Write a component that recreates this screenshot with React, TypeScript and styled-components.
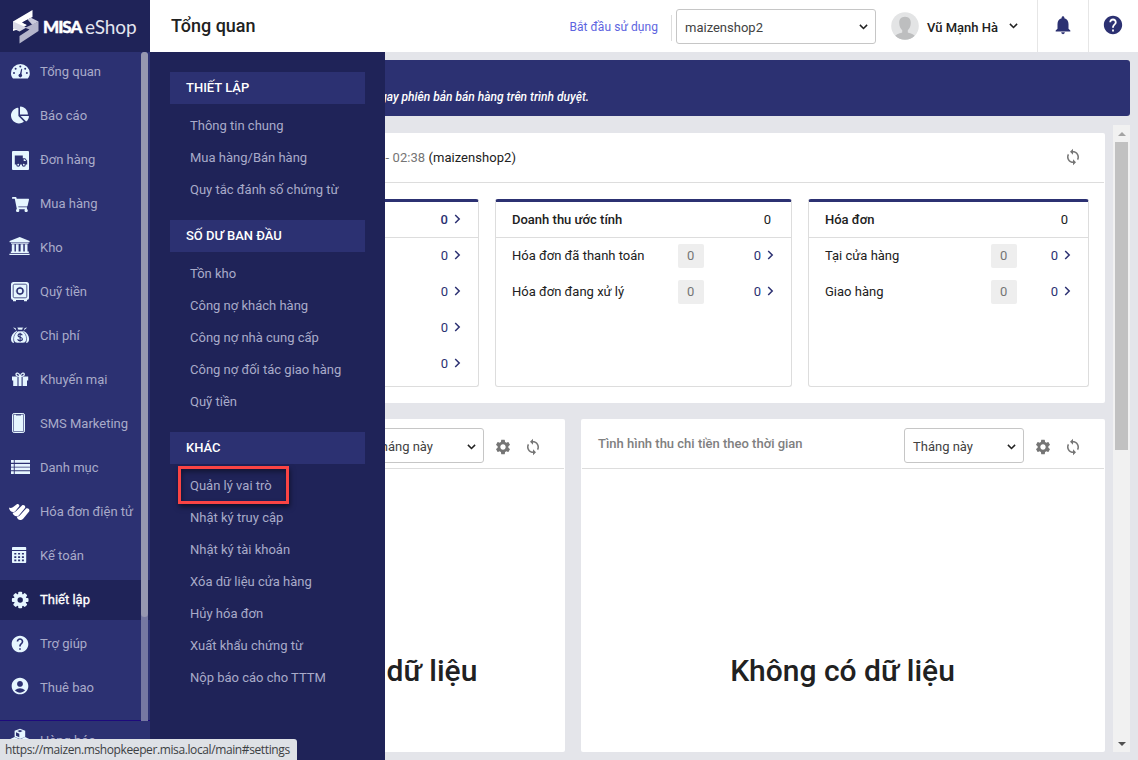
import React from 'react';
import styled, { createGlobalStyle } from 'styled-components';
import { FaChartPie, FaShoppingCart } from 'react-icons/fa';
import { MdAccountCircle, MdHelp, MdNotifications, MdSettings, MdSync } from 'react-icons/md';

const color = {
  navy: '#2c3172',
  deep: '#1f2358',
  line: '#dddddd',
  canvas: '#e4e5ea',
  icon: '#e6f6ff',
  text: '#212121',
  muted: '#a9abc9',
};

const GlobalStyle = createGlobalStyle`
  * { box-sizing: border-box; }
  body { margin: 0; font-family: Roboto, "Liberation Sans", sans-serif; font-size: 13px; color: ${color.text}; background: #fff; overflow: hidden; }
  svg { display: block; flex: none; overflow: visible; }
`;

const Page = styled.div`
  position: relative;
  display: flex;
  width: 1138px;
  height: 760px;
  overflow: hidden;
  white-space: nowrap;
`;

/* ---------- sidebar ---------- */
const Sidebar = styled.aside`
  position: relative;
  flex: none;
  width: 150px;
  height: 760px;
  overflow: hidden;
  background: ${color.navy};
`;
const Brand = styled.div`
  display: flex;
  align-items: center;
  height: 52px;
  padding: 2px 0 0 13px;
  background: ${color.deep};
  color: #fff;
`;
const BrandName = styled.span`
  width: 41px;
  margin-left: 4px;
  padding-bottom: 2px;
  font: 900 17px Lato, sans-serif;
  letter-spacing: -1px;
  -webkit-text-stroke: 0.4px #fff;
`;
const BrandSuffix = styled.span`
  margin-left: 1px;
  padding-bottom: 2px;
  font: 400 19px Lato, sans-serif;
  letter-spacing: -0.1px;
  color: #e4e5f0;
`;
const NavList = styled.nav`
  display: flex;
  flex-direction: column;
  gap: 4px;
  height: 669px;
  border-bottom: 1px solid #1d0a7c;
`;
const NavItem = styled.a<{ $active?: boolean }>`
  display: flex;
  align-items: center;
  flex: none;
  gap: 10px;
  height: 40px;
  padding: 0 0 0 10px;
  color: ${(p) => (p.$active ? '#fff' : color.muted)};
  background: ${(p) => (p.$active ? color.deep : 'transparent')};
  -webkit-text-stroke: ${(p) => (p.$active ? '0.3px #fff' : '0')};
`;
const NavLabel = styled.span`
  padding-bottom: 2px;
`;
const NavIcon = styled.span<{ $lift?: number }>`
  display: flex;
  align-items: center;
  justify-content: center;
  flex: none;
  width: 20px;
  height: 20px;
  margin-bottom: ${(p) => p.$lift || 0}px;
  color: ${color.icon};
`;
const NavTrack = styled.div`
  position: absolute;
  left: 141px;
  top: 52px;
  width: 7px;
  height: 669px;
  border-radius: 4px 4px 0 0;
  background: #7678a2;
`;
const NavThumb = styled.div`
  height: 565px;
  border-radius: 4px;
  background: #9697b0;
`;

/* ---------- flyout ---------- */
const Flyout = styled.div`
  position: absolute;
  left: 150px;
  top: 52px;
  width: 235px;
  height: 708px;
  padding: 20px;
  display: flex;
  flex-direction: column;
  gap: 14px;
  background: ${color.deep};
`;
const FlyoutHead = styled.h3`
  margin: 0 0 6px;
  padding-left: 16px;
  font-size: 13px;
  font-weight: 500;
  line-height: 32px;
  color: #fff;
  background: ${color.navy};
`;
const FlyoutItem = styled.a`
  position: relative;
  display: block;
  padding-left: 20px;
  line-height: 32px;
  height: 32px;
  color: ${color.muted};
`;
const Marker = styled.span`
  position: absolute;
  left: 8px;
  top: -4px;
  width: 111px;
  height: 38px;
  border: 3px solid #fb4444;
  box-shadow: 1px 3px 5px rgba(0, 0, 0, 0.5), inset 1px 3px 5px rgba(0, 0, 0, 0.4);
`;

/* ---------- top bar ---------- */
const Main = styled.main`
  flex: 1;
  display: flex;
  flex-direction: column;
`;
const TopBar = styled.header`
  display: flex;
  align-items: center;
  flex: none;
  height: 52px;
  padding-left: 21px;
  background: #fff;
`;
const Title = styled.h1`
  margin: 0;
  padding-bottom: 2px;
  flex: 1;
  font-size: 18px;
  font-weight: 500;
`;
const StartLink = styled.a`
  margin-top: 1px;
  font-size: 12px;
  letter-spacing: 0.07px;
  color: #5d64e0;
`;
const Rule = styled.i`
  width: 1px;
  height: 26px;
  margin: 4px 4px 0 13px;
  background: ${color.line};
`;
const Select = styled.div<{ $w: number; $drop?: number }>`
  display: flex;
  align-items: center;
  justify-content: space-between;
  flex: none;
  width: ${(p) => p.$w}px;
  height: 35px;
  margin-top: ${(p) => p.$drop || 0}px;
  padding: 2px 7px 0 8px;
  border: 1px solid #c6c6c6;
  border-radius: 3px;
  color: #424242;
  background: #fff;
`;
const UserMenu = styled.div`
  display: flex;
  align-items: center;
  margin: 0 19px 0 15px;
`;
const UserName = styled.span`
  width: 71px;
  margin: 2px 11px 0 8px;
  font-weight: 500;
`;
const TopCell = styled.div<{ $w: number }>`
  display: flex;
  justify-content: center;
  align-items: center;
  width: ${(p) => p.$w}px;
  height: 52px;
  padding: 0 ${(p) => (p.$w < 51 ? 2 : 0)}px 2px 0;
  border-left: 1px solid #e6e6e6;
  color: ${color.navy};
`;

/* ---------- content ---------- */
const Content = styled.section`
  flex: 1;
  display: flex;
  flex-direction: column;
  gap: 9px;
  padding: 8px;
  background: ${color.canvas};
`;
const Banner = styled.div`
  flex: none;
  height: 56px;
  padding-top: 29px;
  border-radius: 3px;
  background: ${color.navy};
  color: #fff;
`;
const BannerText = styled.p`
  width: 431px;
  margin: 0;
  font-size: 12px;
  font-weight: 500;
  font-style: italic;
  line-height: 16px;
  text-align: right;
`;
const ScrollRow = styled.div`
  display: flex;
  flex: 1;
  justify-content: space-between;
  padding-left: 8px;
`;
const Board = styled.div`
  display: flex;
  flex-direction: column;
  width: 939px;
  gap: 16px;
  padding-top: 8px;
`;
const Panel = styled.div<{ $w?: number }>`
  display: flex;
  flex-direction: column;
  flex: none;
  width: ${(p) => (p.$w ? `${p.$w}px` : 'auto')};
  border-radius: 2px;
  background: #fff;
`;
const PanelHead = styled.div`
  display: flex;
  align-items: center;
  justify-content: space-between;
  height: 50px;
  margin: 0 1px;
  padding: 0 22px 0 16px;
  border-bottom: 1px solid ${color.line};
`;
const ActivityText = styled.div`
  width: 333px;
  text-align: right;
  letter-spacing: 0.05px;
  em { font-style: normal; color: #757575; }
`;
const Cards = styled.div`
  display: flex;
  gap: 16px;
  padding: 16px;
`;
const Card = styled.div<{ $w: number }>`
  width: ${(p) => p.$w}px;
  height: 188px;
  border: 1px solid ${color.line};
  border-top: 3px solid ${color.navy};
  border-radius: 3px;
`;
const CardHead = styled.div<{ $link?: boolean }>`
  display: flex;
  align-items: center;
  justify-content: ${(p) => (p.$link ? 'flex-end' : 'space-between')};
  height: 36px;
  padding: 0 ${(p) => (p.$link ? 17 : 20)}px 0 16px;
  border-bottom: 1px solid ${color.line};
  font-weight: 500;
  span { font-weight: 400; }
`;
const CardRow = styled.div`
  display: flex;
  align-items: center;
  justify-content: flex-end;
  height: 36px;
  padding: 0 17px 1px 16px;
`;
const RowLabel = styled.span`
  flex: 1;
`;
const Badge = styled.span<{ $gap: number }>`
  width: 26px;
  height: 24px;
  margin: 1px ${(p) => p.$gap}px 0 0;
  line-height: 24px;
  text-align: center;
  border-radius: 2px;
  color: #757575;
  background: #eeeeee;
`;
const Value = styled.div<{ $bold?: boolean }>`
  display: flex;
  align-items: center;
  gap: 6px;
  color: ${color.navy};
  font-weight: ${(p) => (p.$bold ? 500 : 400)};
  svg { margin-bottom: 1px; }
`;
const ChartRow = styled.div`
  display: flex;
  flex: 1;
  gap: 16px;
`;
const ChartTitle = styled.span`
  flex: 1;
  font-weight: 500;
  color: #808080;
`;
const Tools = styled.div<{ $drop?: number }>`
  display: flex;
  gap: 12px;
  margin: ${(p) => p.$drop || 0}px 0 ${(p) => (p.$drop ? 0 : 2)}px 10px;
  color: #757575;
`;
const Empty = styled.div`
  flex: 1;
  padding: 184px 1px 0 0;
  font-size: 30px;
  font-weight: 500;
  line-height: 36px;
  text-align: center;
`;
const ScrollBar = styled.div`
  display: flex;
  flex-direction: column;
  align-items: center;
  width: 17px;
  background: #f1f1f1;
`;
const ScrollThumb = styled.div`
  width: 13px;
  height: 308px;
  margin-bottom: auto;
  background: #c1c1c1;
`;
const ScrollArrow = styled.div`
  display: flex;
  align-items: center;
  justify-content: center;
  height: 17px;
`;
const StatusBubble = styled.div`
  position: absolute;
  left: 0;
  top: 739px;
  width: 297px;
  height: 21px;
  padding-left: 5px;
  border-top-right-radius: 3px;
  background: #dee1e6;
  color: #3c4043;
  font: 12px/21px "Open Sans", sans-serif;
  letter-spacing: -0.39px;
`;

const cut = color.navy;
const px = { width: 20, height: 20, viewBox: '0 0 20 20', fill: 'currentColor' };

const DashIcon = () => (
  <svg {...px}>
    <path d="M3 16.400C1.600 15 1 13.200 1 11.300a9.400 9.400 0 0 1 18.800 0c0 1.900-.6 3.700-2 5.100z" />
    <g fill={cut}>
      <circle cx="4" cy="11" r="1" /><circle cx="5.600" cy="6.800" r="1" /><circle cx="10.300" cy="4.400" r="1" />
      <circle cx="15.200" cy="6.800" r="1" /><circle cx="16.900" cy="11" r="1" /><circle cx="10.300" cy="13.600" r="1.800" />
      <path d="M9.600 13 11.300 6.800l.9.2L11.200 14z" />
    </g>
  </svg>
);
const TruckIcon = () => (
  <svg {...px}>
    <rect x="2" y="1" width="17" height="19" rx="1" />
    <g fill={cut}>
      <path d="M4.800 5.500h8v2.800h2.400l2 2.500v3.700H4.800z" />
      <circle cx="8.200" cy="14.700" r="2" /><circle cx="13.800" cy="14.700" r="2" />
    </g>
    <path d="M13.700 9.200h1.200l1.300 1.800h-2.500z" /><circle cx="8.200" cy="14.700" r=".9" /><circle cx="13.800" cy="14.700" r=".9" />
  </svg>
);
const BankIcon = () => (
  <svg {...px}>
    <path d="M9.700-1 19.600 3v1.300H-.4V3zM1 4.800h17.500v1H1zM1.800 6.300h2.700v7.900H1.800zM5.900 6.300h2.700v7.900H5.900zM10.600 6.300h2.700v7.900h-2.700zM14.800 6.300h2.700v7.900h-2.700zM.8 13.400h18V15H.8zM-.6 15.700h20.200V17H-.6z" />
  </svg>
);
const SafeIcon = () => (
  <svg {...px}>
    <path d="M3 17h3v2.200H3zM14 17h3v2.200h-3z" />
    <rect x="1" y="0" width="18" height="18" rx="2.500" />
    <rect x="3.200" y="2.200" width="13.600" height="13.600" rx="1.500" fill="none" stroke={cut} strokeWidth=".8" />
    <circle cx="10" cy="9" r="3" fill="none" stroke={cut} strokeWidth="1.500" />
    <path d="M10 4.700v1M10 12.300v1M5.700 9h1M13.300 9h1" stroke={cut} strokeWidth=".7" />
  </svg>
);
const MoneyIcon = () => (
  <svg {...px}>
    <path d="M3 1.500 5.500 2l1 3C3 6.500 1 10 1 13c0 2.500 1.400 3.900 3 4-1-4 .5-8.500 4-11zM17.200 1.500 14.700 2l-1 3c3.500 1.500 5.400 5 5.400 8 0 2.500-1.400 3.900-3 4 1-4-.5-8.500-4-11z" />
    <path d="M7 1.200h6.400L12.300 4h-4.200zM8 5h4.400c2.500 1.800 4.200 4.800 4.200 7.800S15 17 13 17H7.200c-2 0-3.600-1.200-3.600-4.200S5.500 6.800 8 5z" stroke={cut} strokeWidth=".6" />
    <path d="M12.300 9.200c-.4-.9-1.200-1.300-2.200-1.300-1.200 0-2.100.6-2.100 1.600 0 2.400 4.400 1.200 4.400 3.500 0 1.100-1 1.700-2.300 1.700-1.200 0-2.100-.5-2.500-1.500M10.100 6.800v9" fill="none" stroke={cut} strokeWidth="1.100" />
  </svg>
);
const GiftIcon = () => (
  <svg {...px}>
    <path d="M2 6.500h16.200v4H2zM3.200 10.500h13.800V16H3.200z" />
    <path d="M8 7v9M12.100 7v9" stroke={cut} strokeWidth="1.100" />
    <path d="M10.100 6.300C8.500 6.500 6 6 6 4.300S9 2.300 10.100 6.300zM10.200 6.300c1.600.2 4.100-.3 4.100-2s-3-2-4.100 2z" fill="none" stroke="currentColor" strokeWidth="1.300" />
  </svg>
);
const PhoneIcon = () => (
  <svg {...px}>
    <rect x="2.500" y="-.5" width="12" height="19" rx="1.600" fill="none" stroke="currentColor" />
    <path d="M3.600.6h9.800v16.800H3.600z" />
    <path d="M6 .4h5v1H6z" fill={cut} />
  </svg>
);
const ListIcon = () => (
  <svg {...px}>
    <path d="M1 2h2.800v2.800H1zM1 5.900h2.800v2.800H1zM1 9.500h2.800v2.800H1zM1 13.200h2.800V16H1zM4.700 2H20v2.800H4.700zM4.700 5.900H20v2.800H4.700zM4.700 9.500H20v2.800H4.700zM4.700 13.200H20V16H4.700z" />
  </svg>
);
const InvoiceIcon = () => (
  <svg {...px}>
    <g fill="#fff">
      <path d="M-1 5.800c1.800.3 3 .1 4.200-.8L6.800 2.200c1.500-.8 3.200.7 2.300 2.300L5 9.400C2.600 11.200-.4 9.400-1 5.800z" />
      <path d="M2.500 10.800c1.500-.1 2.500-.6 3.500-1.500l6.200-6c1.800-.8 3.800.9 2.800 2.700l-6.200 7.400c-2.300 2-5.400.6-6.300-2.600z" />
      <path d="M6.800 14.800c1.500-.1 2.400-.7 3.400-1.700l5.900-6.500c1.900-1 4.100.9 3 2.900L13.400 16.400c-2.600 2.600-5.600 2-6.600-1.600z" />
    </g>
  </svg>
);
const CalcIcon = () => (
  <svg {...px}>
    <path d="M3.200 1h12.300c.4 0 .7.300.7.700V4H2V1.700c0-.4.500-.7 1.200-.7zM2 5h14.200v11c0 .6-.4 1-1 1H3c-.6 0-1-.4-1-1z" />
    <path d="M4.300 6.900h2v1.700h-2zM8.100 6.900h2v1.700h-2zM11.900 6.900h2v1.700h-2zM4.300 10.200h2v1.700h-2zM8.100 10.200h2v1.700h-2zM11.900 10.200h2v1.700h-2zM4.300 13.500h2v1.700h-2zM8.100 13.500h2v1.700h-2zM11.900 13.500h2v1.700h-2z" fill={cut} />
  </svg>
);
const GearIcon = () => (
  <svg {...px}>
    {[0, 45, 90, 135].map((a) => (
      <rect key={a} x="8.200" y="1.700" width="4" height="16.600" rx="1" transform={`rotate(${a} 10.200 10)`} />
    ))}
    <circle cx="10.200" cy="10" r="6.300" />
    <circle cx="10.200" cy="10" r="2.700" fill={color.deep} />
  </svg>
);
const BoxIcon = () => (
  <svg {...px}>
    <path d="m10-2.300 5.200 2v6L10 8 4.600 5.700v-6zM4.600 6 10 8.500v6L4.600 17-.8 14.500v-6zM15 6l5.400 2.500v6L15 17l-5-2.500v-6z" />
    <path d="M6 1.200 9.300 2.700v3.600L6 4.800zM10-1.100 12.600 0 10 1.200 7.300 0z" fill={cut} />
  </svg>
);
const Chevron = () => (
  <svg width="9" height="6" viewBox="0 0 9 6" fill="none" stroke="#212121" strokeWidth="1.500"><path d="m.9.900 3.600 3.600L8.100.9" /></svg>
);
const Next = () => (
  <svg width="7" height="10" viewBox="0 0 7 10" fill="none" stroke={color.navy} strokeWidth="1.500"><path d="m1.200 1 4 4-4 4" /></svg>
);
const BrandMark = () => (
  <svg width="26" height="34" viewBox="0 0 26 34">
    <path d="M19.500 0v7L9 12.500 14 15l-5 3-9-2.500v-4z" fill="#fff" />
    <path d="M0 11.500 13.500 17.500 6.500 21.500 0 18.500z" fill="#d9dae6" />
    <path d="m9.500 12.500 5-3 6 3.300-4.500 2.700z" fill={color.deep} />
    <path d="m14.500 9.500 3.500-1.700 7.500 3.700-6 3.500z" fill="#c9cadb" />
    <path d="m0 18.500 0 2.500 4.500-1.500z" fill="#fff" />
    <path d="M25.500 11.500V21L6.500 33.500V26l10-6.500-4.500-1.800z" fill="#b4b5cb" />
  </svg>
);
const Avatar = () => (
  <svg width="28" height="28" viewBox="0 0 28 28">
    <clipPath id="face"><circle cx="14" cy="14" r="13.800" /></clipPath>
    <circle cx="14" cy="14" r="13.800" fill="#e3e4e5" />
    <path clipPath="url(#face)" fill="#bdbebf" d="M14 4.800c-4 0-6 2.800-5.800 6.200.1 3.500 1.500 6 3 7.300v2.200C8 21.500 4 22.500 3 26v2h22v-2c-1-3.500-5-4.500-8.200-5.500v-2.200c1.500-1.300 2.900-3.800 3-7.300.2-3.400-1.800-6.200-5.800-6.200z" />
  </svg>
);

const nav: { label: string; icon: React.ReactNode; lift?: number }[] = [
  { label: 'Tổng quan', icon: <DashIcon /> },
  { label: 'Báo cáo', icon: <FaChartPie size={18} />, lift: 3 },
  { label: 'Đơn hàng', icon: <TruckIcon /> },
  { label: 'Mua hàng', icon: <FaShoppingCart size={17} /> },
  { label: 'Kho', icon: <BankIcon /> },
  { label: 'Quỹ tiền', icon: <SafeIcon /> },
  { label: 'Chi phí', icon: <MoneyIcon /> },
  { label: 'Khuyến mại', icon: <GiftIcon /> },
  { label: 'SMS Marketing', icon: <PhoneIcon /> },
  { label: 'Danh mục', icon: <ListIcon /> },
  { label: 'Hóa đơn điện tử', icon: <InvoiceIcon /> },
  { label: 'Kế toán', icon: <CalcIcon /> },
  { label: 'Thiết lập', icon: <GearIcon /> },
  { label: 'Trợ giúp', icon: <MdHelp size={20} />, lift: 1 },
  { label: 'Thuê bao', icon: <MdAccountCircle size={20} />, lift: 4 },
];

const groups = [
  { head: 'THIẾT LẬP', items: ['Thông tin chung', 'Mua hàng/Bán hàng', 'Quy tắc đánh số chứng từ'] },
  { head: 'SỐ DƯ BAN ĐẦU', items: ['Tồn kho', 'Công nợ khách hàng', 'Công nợ nhà cung cấp', 'Công nợ đối tác giao hàng', 'Quỹ tiền'] },
  { head: 'KHÁC', items: ['Quản lý vai trò', 'Nhật ký truy cập', 'Nhật ký tài khoản', 'Xóa dữ liệu cửa hàng', 'Hủy hóa đơn', 'Xuất khẩu chứng từ', 'Nộp báo cáo cho TTTM'] },
];

function StatCard({ title, width, rows, badgeGap }: { title: string; width: number; rows: string[]; badgeGap: number }) {
  return (
    <Card $w={width}>
      <CardHead>{title}<span>0</span></CardHead>
      {rows.map((r) => (
        <CardRow key={r}>
          <RowLabel>{r}</RowLabel>
          <Badge $gap={badgeGap}>0</Badge>
          <Value>0<Next /></Value>
        </CardRow>
      ))}
    </Card>
  );
}

function ChartPanel({ title, width }: { title?: string; width: number }) {
  return (
    <Panel $w={width}>
      <PanelHead>
        <ChartTitle>{title}</ChartTitle>
        <Select $w={120} $drop={4}>Tháng này<Chevron /></Select>
        <Tools $drop={7}><MdSettings size={18} /><MdSync size={18} /></Tools>
      </PanelHead>
      <Empty>Không có dữ liệu</Empty>
    </Panel>
  );
}

export default function App() {
  return (
    <Page>
      <GlobalStyle />
      <Sidebar>
        <Brand><BrandMark /><BrandName>MISA</BrandName><BrandSuffix>eShop</BrandSuffix></Brand>
        <NavList>
          {nav.map(({ label, icon, lift }) => (
            <NavItem key={label} $active={label === 'Thiết lập'}>
              <NavIcon $lift={lift}>{icon}</NavIcon>
              <NavLabel>{label}</NavLabel>
            </NavItem>
          ))}
        </NavList>
        <NavItem><NavIcon><BoxIcon /></NavIcon><NavLabel>Hàng hóa</NavLabel></NavItem>
        <NavTrack><NavThumb /></NavTrack>
      </Sidebar>
      <Main>
        <TopBar>
          <Title>Tổng quan</Title>
          <StartLink>Bắt đầu sử dụng</StartLink>
          <Rule />
          <Select $w={200}>maizenshop2<Chevron /></Select>
          <UserMenu>
            <Avatar />
            <UserName>Vũ Mạnh Hà</UserName>
            <Chevron />
          </UserMenu>
          <TopCell $w={51}><MdNotifications size={22} /></TopCell>
          <TopCell $w={50}><MdHelp size={22} /></TopCell>
        </TopBar>
        <Content>
          <Banner><BannerText>ngay phiên bản bán hàng trên trình duyệt.</BannerText></Banner>
          <ScrollRow>
            <Board>
              <Panel>
                <PanelHead>
                  <ActivityText><em>- 02:38</em> (maizenshop2)</ActivityText>
                  <Tools><MdSync size={18} /></Tools>
                </PanelHead>
                <Cards>
                  <Card $w={297}>
                    <CardHead $link><Value $bold>0<Next /></Value></CardHead>
                    {[0, 0, 0, 0].map((count, i) => (
                      <CardRow key={i}><Value>{count}<Next /></Value></CardRow>
                    ))}
                  </Card>
                  <StatCard title="Doanh thu ước tính" width={297} rows={['Hóa đơn đã thanh toán', 'Hóa đơn đang xử lý']} badgeGap={50} />
                  <StatCard title="Hóa đơn" width={281} rows={['Tại cửa hàng', 'Giao hàng']} badgeGap={34} />
                </Cards>
              </Panel>
              <ChartRow>
                <ChartPanel width={399} />
                <ChartPanel title="Tình hình thu chi tiền theo thời gian" width={524} />
              </ChartRow>
            </Board>
            <ScrollBar>
              <ScrollArrow><svg width="8" height="4"><path d="M0 4h8L4 0z" fill="#a3a3a3" /></svg></ScrollArrow>
              <ScrollThumb />
              <ScrollArrow><svg width="8" height="4"><path d="M0 0h8L4 4z" fill="#505050" /></svg></ScrollArrow>
            </ScrollBar>
          </ScrollRow>
        </Content>
      </Main>
      <Flyout>
        {groups.map((g) => (
          <div key={g.head}>
            <FlyoutHead>{g.head}</FlyoutHead>
            {g.items.map((t) => (
              <FlyoutItem key={t}>{t}{t === 'Quản lý vai trò' && <Marker />}</FlyoutItem>
            ))}
          </div>
        ))}
      </Flyout>
      <StatusBubble>https://maizen.mshopkeeper.misa.local/main#settings</StatusBubble>
    </Page>
  );
}
